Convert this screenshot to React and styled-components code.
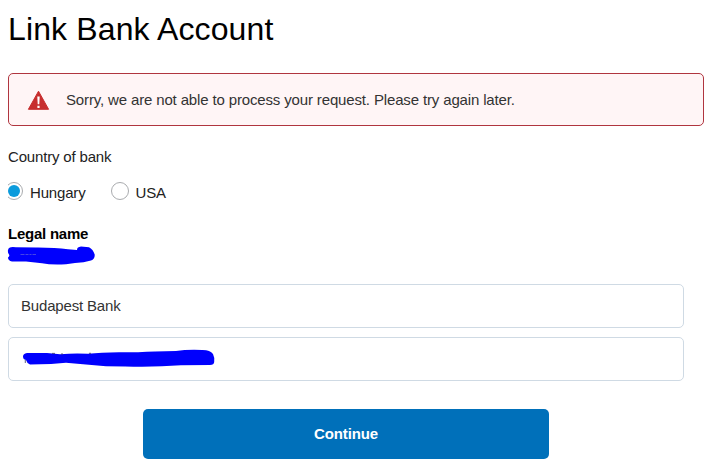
import React, { useState } from "react";
import styled, { createGlobalStyle } from "styled-components";

const GlobalStyle = createGlobalStyle`
  * { box-sizing: border-box; }
  body {
    margin: 0;
    background: #fff;
    font-family: "Liberation Sans", Arial, sans-serif;
    font-size: 15px;
    line-height: 20px;
    letter-spacing: -0.17px;
    color: #222;
  }
`;

const Page = styled.main`
  display: flex;
  flex-direction: column;
  width: 712px;
  height: 470px;
  padding: 9px 8px 0;
  overflow: hidden;
`;

const Title = styled.h1`
  margin: 0 0 24px;
  font-size: 32px;
  font-weight: 400;
  line-height: 40px;
  letter-spacing: 0.13px;
  color: #000;
`;

const Alert = styled.div`
  display: flex;
  align-items: center;
  gap: 16px;
  height: 53px;
  padding-left: 18px;
  border: 1px solid #b0353f;
  border-radius: 5px;
  background: #fff5f6;
  letter-spacing: -0.145px;
  color: #333;
`;

const AlertIcon = styled.svg`
  display: block;
  width: 23px;
  height: 21px;
`;

const Label = styled.div`
  margin-top: ${(p) => p.$top}px;
  font-weight: ${(p) => (p.$bold ? 700 : 400)};
  letter-spacing: ${(p) => (p.$bold ? -0.24 : -0.17)}px;
  color: ${(p) => (p.$bold ? "#000" : "#222")};
`;

const RadioGroup = styled.div`
  display: flex;
  gap: 25px;
  height: 20px;
  margin-top: 15px;
`;

const RadioOption = styled.label`
  display: flex;
  gap: 7px;
  line-height: 22px;
  cursor: pointer;
`;

const RadioMark = styled.svg`
  display: block;
  width: ${(p) => p.$width}px;
  height: 20px;
`;

const HiddenInput = styled.input`
  display: none;
`;

const Redaction = styled.svg`
  display: block;
  width: ${(p) => p.$width}px;
  height: 20px;
  overflow: visible;
`;

const Fields = styled.div`
  display: flex;
  flex-direction: column;
  gap: 9px;
  width: 676px;
  margin-top: 20px;
`;

const Field = styled.div`
  display: flex;
  align-items: center;
  height: 44px;
  padding-left: ${(p) => p.$inset}px;
  border: 1px solid #cfdae4;
  border-radius: 5px;
  color: #333;
`;

const Submit = styled.button`
  width: 406px;
  height: 50px;
  margin: 28px 0 0 135px;
  padding: 0;
  border: 0;
  border-radius: 5px;
  background: #0070ba;
  color: #fff;
  font: 700 15px/20px "Liberation Sans", Arial, sans-serif;
  letter-spacing: -0.12px;
`;

function Radio({ label, clipped, checked, onChange }) {
  const width = clipped ? 15 : 18;
  return (
    <RadioOption>
      <HiddenInput type="radio" name="country" checked={checked} onChange={onChange} />
      <RadioMark $width={width} viewBox={`${18 - width} 0 ${width} 20`}>
        <circle cx="9" cy="9" r="8.5" fill="#fff" stroke="#a9abae" />
        {checked && <circle cx="9" cy="9" r="6" fill="#0b9bdc" />}
      </RadioMark>
      {label}
    </RadioOption>
  );
}

export default function App() {
  const [country, setCountry] = useState("Hungary");
  return (
    <>
      <GlobalStyle />
      <Page>
        <Title>Link Bank Account</Title>
        <Alert role="alert">
          <AlertIcon viewBox="0 0 23 21">
            <path d="M11.5 2.2 L21.6 20.3 H1.4 Z" fill="#c72e2e" stroke="#c72e2e" strokeLinejoin="round" />
            <path d="M10.3 7.5 H12.7 L12.3 15.2 H10.7 Z M10.4 16.8 H12.6 V18.9 H10.4 Z" fill="#fff" />
          </AlertIcon>
          Sorry, we are not able to process your request. Please try again later.
        </Alert>
        <Label $top={21}>Country of bank</Label>
        <RadioGroup>
          <Radio label="Hungary" clipped checked={country === "Hungary"} onChange={() => setCountry("Hungary")} />
          <Radio label="USA" checked={country === "USA"} onChange={() => setCountry("USA")} />
        </RadioGroup>
        <Label $top={22} $bold>Legal name</Label>
        <Redaction $width={88} viewBox="0 0 88 20">
          <path
            d="M2 3 Q3 2 8 2.6 L28 2.8 Q47 2.7 60 4.6 L69 5.3 Q69 2.5 73 2 L81 2.6 Q85 4.6 86.7 10 Q87 14.5 83 15.8 Q76 18 67 18.4 L58 19.6 Q43 20.4 34 18.6 L18 16.8 L4 17 Q0 16 0 13 Q2 11.5 1 10 Q-.5 7.5 0 5.5 Q.5 3.4 2 3Z"
            transform="translate(0 .6)"
            fill="#0000fd"
          />
          <path d="M12.5 10.5 H28" stroke="#5555e0" strokeWidth=".8" strokeDasharray="4 1 3 1 2 1" />
        </Redaction>
        <Fields>
          <Field $inset={12}>Budapest Bank</Field>
          <Field $inset={14}>
            <Redaction $width={194} viewBox="0 0 194 20">
              <path
                d="M0 7 Q0 4 4 3.5 L24 3.6 L37 4.8 Q52 3.6 65 4.4 Q78 3 96 2.9 Q116 2.8 132 2 L153 1.5 Q164 -.1 179 .5 Q187 .3 190 4.7 Q192 9 191.2 12.5 Q191 15.4 187 15.6 L158 15.9 Q131 17.8 102 17 L83 16.9 L60 14.9 L43 13.4 L28 14.5 L7 15 Q4 14 3 10.5 Q0 10 0 7Z"
                transform="translate(0 .4)"
                fill="#0000fd"
              />
              <path d="M2.3 11 V14 M29 4.4 H32 M38 5 H40 M66 4.3 H68" stroke="#333366" strokeWidth=".8" />
            </Redaction>
          </Field>
        </Fields>
        <Submit type="button">Continue</Submit>
      </Page>
    </>
  );
}
